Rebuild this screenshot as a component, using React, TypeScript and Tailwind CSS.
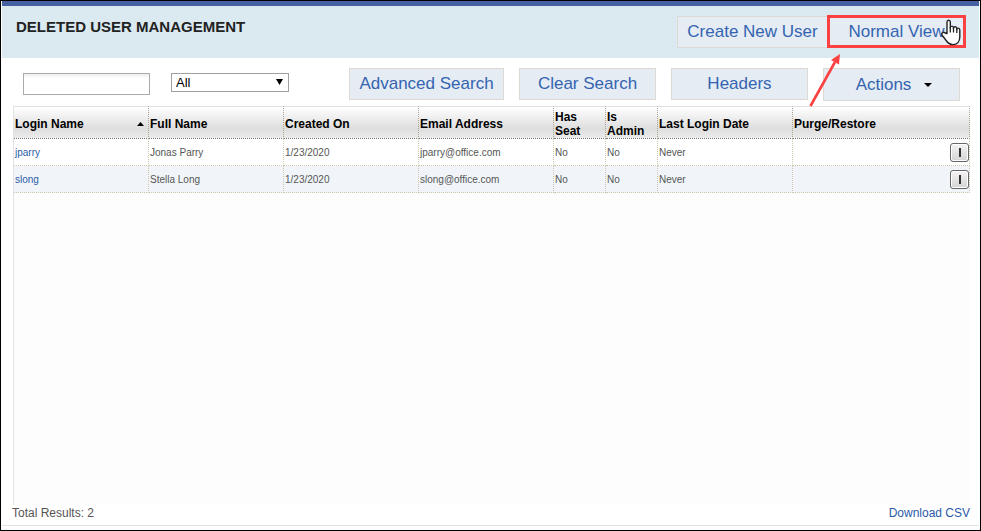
import { ReactNode } from 'react'

interface User {
  login: string
  name: string
  created: string
  email: string
  hasSeat: string
  isAdmin: string
  lastLogin: string
}

const USERS: User[] = [
  { login: 'jparry', name: 'Jonas Parry', created: '1/23/2020', email: 'jparry@office.com', hasSeat: 'No', isAdmin: 'No', lastLogin: 'Never' },
  { login: 'slong',  name: 'Stella Long', created: '1/23/2020', email: 'slong@office.com',  hasSeat: 'No', isAdmin: 'No', lastLogin: 'Never' },
]

const COLUMNS = [
  { label: 'Login Name',      width: 'w-[135px]' },
  { label: 'Full Name',       width: 'w-[135px]' },
  { label: 'Created On',      width: 'w-[135px]' },
  { label: 'Email Address',   width: 'w-[135px]' },
  { label: 'Has Seat',        width: 'w-[52px]' },
  { label: 'Is Admin',        width: 'w-[52px]' },
  { label: 'Last Login Date', width: 'w-[135px]' },
  { label: 'Purge/Restore',   width: '' },
]

function Button({ className = '', children }: { className?: string; children: ReactNode }) {
  return (
    <button
      type="button"
      className={`flex items-center justify-center whitespace-nowrap bg-[#e5ecf4] text-[17px] leading-5 text-[#3464b0] ${className}`}
    >
      {children}
    </button>
  )
}

function HandCursor() {
  return (
    <svg className="pointer-events-none absolute right-[5px] top-[4px] z-20" width="20" height="27" viewBox="0 0 20 27">
      <path
        d="M6 14.500V3C6 .6 9.300 .6 9.300 3V9C9.300 6.500 12.500 6.500 12.500 9V9.500C12.500 7.200 15.800 7.200 15.800 9.800V10.500C15.800 8.600 18.800 8.600 18.800 11V18C18.800 22.500 16 25.600 12 25.600C8.500 25.600 6.500 23.500 5.200 21.500L1.300 16.500C-.2 14.400 2.300 12.200 4.200 14Z"
        fill="#fff"
        stroke="#222"
        strokeWidth="1.4"
        strokeLinejoin="round"
      />
      <path d="M9.300 8V13.500M12.500 9V13.500M15.800 10V14" stroke="#222" strokeWidth="1.3" fill="none" />
    </svg>
  )
}

function Arrow() {
  return (
    <svg className="pointer-events-none absolute right-[125px] top-[37px] z-20" width="34" height="56" viewBox="0 0 34 56">
      <path d="M3.500 54L28 10" stroke="#fb4141" strokeWidth="2.6" />
      <path d="M33 2L24 8L32 12.500Z" fill="#fb4141" />
    </svg>
  )
}

export default function App() {
  return (
    <div className="flex min-h-screen flex-col border border-black bg-white font-['Liberation_Sans',Arial,sans-serif] text-[#555]">
      <div className="mx-px mb-1 flex grow flex-col border-b border-[#e2e2e2]">
        <header className="flex h-[57px] items-start justify-between border-t-[5px] border-[#4661a2] bg-[#dbe9f0] pr-[13px] pl-[14px]">
          <h1 className="mt-[11px] text-[15px] leading-5 font-bold text-[#222]">DELETED USER MANAGEMENT</h1>
          <div className="relative mt-[9px] flex items-start">
            <Button className="mt-px h-8 w-[150px] border border-r-0 border-[#dcdad2]">Create New User</Button>
            <Button className="h-[33px] w-[139px] border-[3px] border-[#fb4141]">Normal View</Button>
            <HandCursor />
            <Arrow />
          </div>
        </header>

        <div className="flex items-start justify-between pt-[10px] pr-[19px] pb-[5px] pl-[21px]">
          <div className="mt-[5px] flex items-start gap-[21px]">
            <input
              type="text"
              aria-label="Search users"
              className="h-[22px] w-[127px] border border-[#aaa] bg-linear-to-b from-[#eee] to-white to-20% px-1 text-[13px] outline-none"
            />
            <div className="relative">
              <select
                aria-label="Filter"
                className="block h-[19px] w-[118px] appearance-none border border-[#a0a0a0] bg-white pl-1 text-[13px] leading-4 text-black outline-none"
              >
                <option>All</option>
              </select>
              <svg className="pointer-events-none absolute top-[6px] right-[6px]" width="7" height="6" viewBox="0 0 7 6">
                <path d="M0 0H7L3.500 6Z" />
              </svg>
            </div>
          </div>
          <div className="flex items-start gap-[15px]">
            <Button className="h-8 w-[155px] border border-[#dcdad2]">Advanced Search</Button>
            <Button className="h-8 w-[137px] border border-[#dcdad2]">Clear Search</Button>
            <Button className="h-8 w-[137px] border border-[#dcdad2]">Headers</Button>
            <Button className="h-[33px] w-[137px] gap-[13px] border border-[#dcdad2] pt-px pl-[5px]">
              Actions
              <svg width="8" height="4" viewBox="0 0 8 4">
                <path d="M0 0H8L4 4Z" fill="#000" />
              </svg>
            </Button>
          </div>
        </div>

        <main className="mr-[9px] ml-[11px] grow border-l border-[#e2e2e2] bg-[#fdfdfd]">
          <table className="w-full table-fixed border-separate border-spacing-0 text-left">
            <thead>
              <tr className="h-[33px]">
                {COLUMNS.map(({ label, width }, i) => (
                  <th
                    key={label}
                    aria-sort={i === 0 ? 'ascending' : undefined}
                    className={`border-t border-r border-b border-t-[#e2e2e2] border-r-[#aaa693] border-b-[#777] [border-style:solid_dotted_dotted_solid] border-l-0 bg-linear-to-b from-white via-[#dedede] via-70% to-[#ebebeb] p-0 pt-[2px] pl-px text-[12px] leading-[14px] font-bold text-black ${width}`}
                  >
                    <span className="flex items-center justify-between pr-1">
                      {label}
                      {i === 0 && (
                        <svg width="7" height="4" viewBox="0 0 7 4">
                          <path d="M0 4H7L3.500 0Z" />
                        </svg>
                      )}
                    </span>
                  </th>
                ))}
              </tr>
            </thead>
            <tbody>
              {USERS.map(user => (
                <tr
                  key={user.login}
                  className="h-[27px] bg-white text-[10px] leading-[14px] even:bg-[#f1f5fa] [&>td]:border-r [&>td]:border-b [&>td]:border-dotted [&>td]:border-[#cdc7b0] [&>td]:p-0 [&>td]:pt-[2px] [&>td]:pl-px [&>td:last-child]:pt-0"
                >
                  <td><a href="#" className="text-[#2a5ba8]">{user.login}</a></td>
                  <td>{user.name}</td>
                  <td>{user.created}</td>
                  <td>{user.email}</td>
                  <td>{user.hasSeat}</td>
                  <td>{user.isAdmin}</td>
                  <td>{user.lastLogin}</td>
                  <td>
                    <button
                      type="button"
                      aria-label={`Purge or restore ${user.login}`}
                      className="ml-auto flex size-[19px] items-center justify-center rounded-[3px] border border-[#666] bg-linear-to-b from-[#f4f4f4] to-[#d4d4d4] shadow-[inset_0_0_0_1px_#fff]"
                    >
                      <span className="h-[9px] w-[2px] bg-[#333]" />
                    </button>
                  </td>
                </tr>
              ))}
            </tbody>
          </table>
        </main>

        <footer className="flex h-5 items-center justify-between pr-[9px] pb-1 pl-[10px] text-[12px] leading-4">
          <span>Total Results: 2</span>
          <a href="#" className="text-[#2a5ba8]">Download CSV</a>
        </footer>
      </div>
    </div>
  )
}
